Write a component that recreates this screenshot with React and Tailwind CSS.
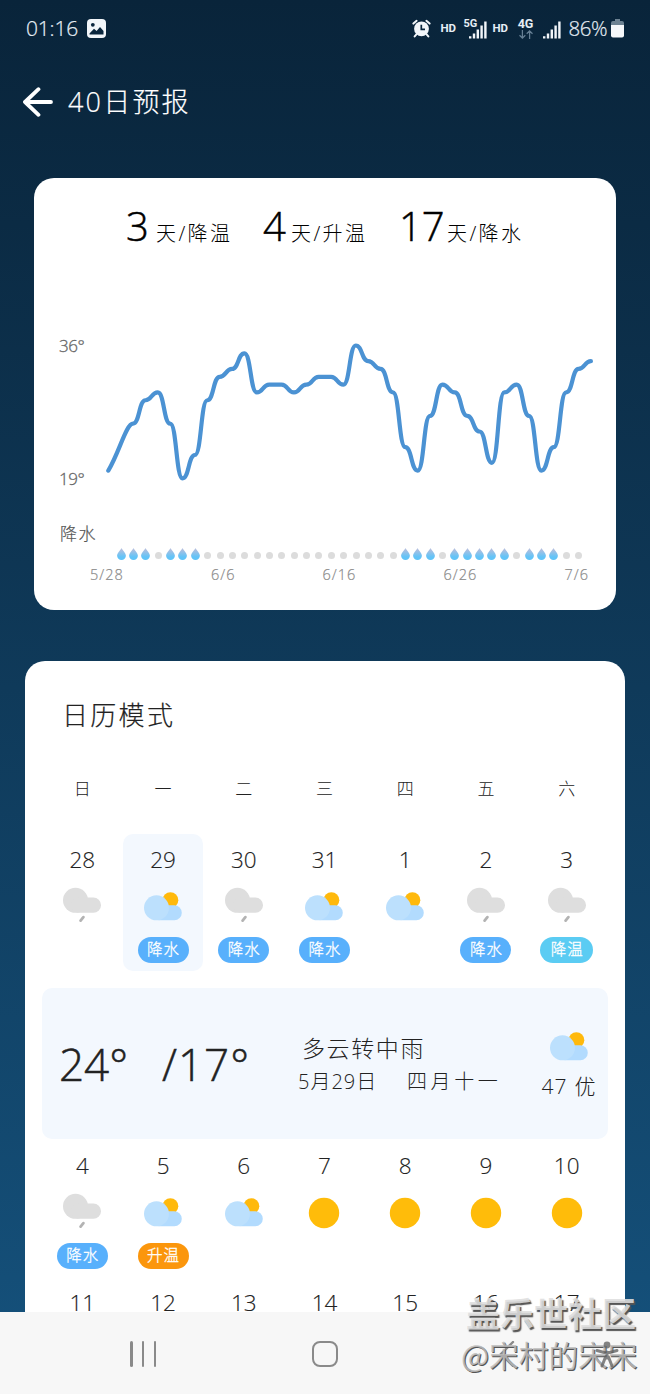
import clsx from 'clsx'

const temps = [
  20, 23, 26, 29, 30, 26, 19, 22, 29, 32, 33, 35, 30, 31, 31, 30, 31, 32, 32, 31,
  36, 34, 33, 30, 23, 20, 27, 31, 30, 27, 25, 21, 30, 31, 27, 20, 23, 30, 33, 34,
]

const rainDays = [0, 1, 2, 4, 5, 6, 23, 24, 25, 27, 28, 29, 30, 31, 33, 34, 35]

const stats = [
  { value: '3', label: '天/降温', box: 'w-[137px]', num: 'w-[30px]' },
  { value: '4', label: '天/升温', box: 'w-[136px]', num: 'w-[28px]' },
  { value: '17', label: '天/降水', box: 'w-[126px]', num: 'w-[48px]' },
]

const weekdays = ['日', '一', '二', '三', '四', '五', '六']

const firstWeek = [
  { day: 28, icon: 'rain' },
  { day: 29, icon: 'cloudy', tag: '降水', selected: true },
  { day: 30, icon: 'rain', tag: '降水' },
  { day: 31, icon: 'cloudy', tag: '降水' },
  { day: 1, icon: 'cloudy' },
  { day: 2, icon: 'rain', tag: '降水' },
  { day: 3, icon: 'rain', tag: '降温' },
]

const secondWeek = [
  { day: 4, icon: 'rain', tag: '降水' },
  { day: 5, icon: 'cloudy', tag: '升温' },
  { day: 6, icon: 'cloudy' },
  { day: 7, icon: 'sun' },
  { day: 8, icon: 'sun' },
  { day: 9, icon: 'sun' },
  { day: 10, icon: 'sun' },
]

const thirdWeek = [11, 12, 13, 14, 15, 16, 17].map((day) => ({ day }))

const tagStyles = {
  降水: 'w-[51px] bg-[#58b0fc]',
  降温: 'w-[53px] bg-[#5bccf3]',
  升温: 'w-[51px] bg-[#fb960c]',
}

function WeatherIcon({ type }) {
  return (
    <svg className="h-9 w-[38px]" viewBox="0 0 38 36">
      {type === 'rain' && (
        <>
          <circle cx="12.5" cy="13.3" r="12.5" fill="#dedede" />
          <rect x="8" y="10.5" width="30" height="15.3" rx="7.6" fill="#dedede" />
          <path d="M20.4 30.2L17.6 33.6" stroke="#b3b3b3" strokeWidth="2.8" strokeLinecap="round" />
        </>
      )}
      {type === 'cloudy' && (
        <>
          <circle cx="26.4" cy="13.2" r="7.9" fill="#ffb90c" />
          <rect x="8" y="18.2" width="29.8" height="15.1" rx="7.5" fill="#b2dbfe" />
          <circle cx="12.5" cy="20.8" r="12.5" fill="#bce0fd" />
        </>
      )}
      {type === 'sun' && <circle cx="19" cy="20" r="15.2" fill="#ffbc0a" />}
    </svg>
  )
}

function StatusBar() {
  return (
    <div className="flex h-[57px] items-center pl-[26px] pr-[26px] text-[#e6eef5]">
      <span className="w-[61px] text-[21px] font-light tracking-[-0.2px] [-webkit-text-stroke:0.2px]">01:16</span>
      <svg className="h-[19px] w-[19px]" viewBox="0 0 19 19">
        <rect width="19" height="19" rx="4" fill="#f2f6fa" />
        <circle cx="5.8" cy="5.8" r="1.9" fill="#0a263d" />
        <path d="M2.5 14.5L7 9.8L9.6 12L13 8L16.5 12V15.5H2.5Z" fill="#0a263d" />
      </svg>
      <svg className="ml-auto h-[19px] w-[19px]" viewBox="0 0 19 19">
        <circle cx="9.5" cy="9.8" r="7.4" fill="#f2f6fa" />
        <path d="M1.4 4.6L4.6 1.8M17.6 4.6L14.4 1.8M4.6 15.2L2.7 17.4M14.4 15.2L16.3 17.4" stroke="#f2f6fa" strokeWidth="2" strokeLinecap="round" />
        <path d="M9.3 5.8V10.4H13" stroke="#0a263d" strokeWidth="1.7" fill="none" />
      </svg>
      <span className="ml-2.5 w-4 font-[Roboto] text-[11.5px] font-bold">HD</span>
      <div className="relative ml-[7px] h-5 w-[25px]">
        <span className="absolute -top-px left-0 font-[Roboto] text-[11px] font-bold leading-none">5G</span>
        <Signal className="absolute right-0.5 top-0.5" />
      </div>
      <span className="ml-1 w-4 font-[Roboto] text-[11.5px] font-bold">HD</span>
      <div className="ml-[9px] flex h-5 w-4 flex-col items-center">
        <span className="font-[Roboto] text-[12.5px] font-bold leading-[9px]">4G</span>
        <svg className="mt-0.5 h-2.5 w-4" viewBox="0 0 16 10" fill="none" stroke="#667f94" strokeWidth="1.4">
          <path d="M4 0V9M0.8 5.8L4 9L7.2 5.8M12 10V1M8.8 4.2L12 1L15.2 4.2" />
        </svg>
      </div>
      <Signal className="ml-[9px] mt-0.5" />
      <span className="ml-2 w-10 whitespace-nowrap text-[20.5px] font-light tracking-[-0.4px] [-webkit-text-stroke:0.2px]">86%</span>
      <svg className="ml-[2.5px] h-[19px] w-[13px]" viewBox="0 0 13 19">
        <path d="M4 0H9V2H11Q13 2 13 4V7H0V4Q0 2 2 2H4Z" fill="#6d8292" />
        <path d="M0 6H13V16.5Q13 18.5 11 18.5H2Q0 18.5 0 16.5Z" fill="#f6f8fa" />
      </svg>
    </div>
  )
}

function Signal({ className }) {
  return (
    <svg className={clsx('h-[18px] w-[18px]', className)} viewBox="0 0 18 18" stroke="#f2f6fa" strokeWidth="2.4">
      <path d="M1.2 17.6V15.2M5 17.6V12.5M8.8 17.6V8.5M12.6 17.6V4.5M16.4 17.6V0.5" />
    </svg>
  )
}

function TemperatureLine() {
  const points = temps.map((t, i) => [6.3 + i * 12.375, 10.5 + (36 - t) * 7.82])
  let d = `M${points[0]} C${points[0][0] + 11},${points[0][1] - 18} ${points[2][0] - 7},${points[2][1]} ${points[2]}`
  for (let i = 3; i < points.length; i++) {
    const [x0, y0] = points[i - 1]
    const [x1, y1] = points[i]
    d += ` C${x0 + 6.5},${y0} ${x1 - 6.5},${y1} ${x1},${y1}`
  }
  return (
    <svg className="h-[155px] w-[500px]" viewBox="0 0 500 155">
      <path d={d} fill="none" stroke="#4b92d3" strokeWidth="4.2" strokeLinecap="round" strokeLinejoin="round" />
    </svg>
  )
}

function RainRow() {
  return (
    <div className="ml-[81px] flex h-4 items-center">
      {Array.from({ length: 38 }, (_, i) => (
        <span key={i} className="flex w-[12.36px] justify-center">
          {rainDays.includes(i) ? (
            <svg className="h-3 w-[9px]" viewBox="0 0 9 12">
              <defs>
                <linearGradient id={`drop-${i}`} x1="0" y1="0" x2="0" y2="1">
                  <stop offset="0.15" stopColor="#b0bfdf" />
                  <stop offset="0.75" stopColor="#62c4f8" />
                </linearGradient>
              </defs>
              <path d="M4.5 0C5.6 2.4 8.9 4.9 8.9 7.7A4.4 4.2 0 0 1 0.1 7.7C0.1 4.9 3.4 2.4 4.5 0Z" fill={`url(#drop-${i})`} />
            </svg>
          ) : (
            <span className="mt-[3px] h-[7px] w-[7px] rounded-full bg-[#dcdcdc]" />
          )}
        </span>
      ))}
    </div>
  )
}

function TrendCard() {
  return (
    <div className="mx-[34px] mt-[31px] h-[432px] rounded-[20px] bg-white">
      <div className="flex h-[157px] pl-[92px] pt-[24px] text-black">
        {stats.map((s) => (
          <div key={s.label} className={clsx('flex h-12 items-baseline whitespace-nowrap', s.box)}>
            <span className={clsx('text-[40px] font-light leading-[48px] [-webkit-text-stroke:0.5px]', s.num)}>{s.value}</span>
            <span className="text-[20px] font-light tracking-[2.4px]">{s.label}</span>
          </div>
        ))}
      </div>
      <div className="flex pl-[25px] text-[17px] font-light text-[#666]">
        <div className="flex w-[43px] flex-col justify-between leading-[22px] tracking-[-0.5px] [-webkit-text-stroke:0.3px]">
          <span>36°</span>
          <span>19°</span>
        </div>
        <TemperatureLine />
      </div>
      <div className="ml-[26px] mt-[31px] h-[25px] text-[17px] font-light leading-[25px] tracking-[1.5px] text-[#555] [-webkit-text-stroke:0.2px]">降水</div>
      <RainRow />
      <div className="ml-14 mt-[5px] flex w-[499px] justify-between text-[14.5px] font-light leading-4 tracking-[1px] text-[#8a8a8a] [-webkit-text-stroke:0.2px]">
        <span>5/28</span>
        <span>6/6</span>
        <span>6/16</span>
        <span>6/26</span>
        <span>7/6</span>
      </div>
    </div>
  )
}

function DayCell({ day, icon, tag, selected }) {
  return (
    <div className={clsx('flex h-[137px] flex-col items-center rounded-[10px]', selected && 'bg-[#f3f8fe]')}>
      <span className="mb-px h-[52px] text-[22.5px] font-light leading-[52px] text-[#222] [-webkit-text-stroke:0.15px]">{day}</span>
      <WeatherIcon type={icon} />
      {tag && (
        <span className={clsx('mt-[14px] flex h-[26px] items-center justify-center rounded-full pl-px text-[15.5px] font-light tracking-[1px] text-white [-webkit-text-stroke:0.3px]', tagStyles[tag])}>
          {tag}
        </span>
      )}
    </div>
  )
}

function Week({ days }) {
  return (
    <div className="mr-px grid grid-cols-7">
      {days.map((d) => (
        <DayCell key={d.day} {...d} />
      ))}
    </div>
  )
}

function CalendarCard() {
  return (
    <div className="mx-[25px] mt-[51px] h-[651px] overflow-hidden rounded-t-[20px] bg-white px-[17px] text-[#222]">
      <h2 className="h-[109px] pl-5 text-[26px] font-light leading-[108px] tracking-[2.3px] [-webkit-text-stroke:0.2px]">日历模式</h2>
      <div className="mr-px grid h-16 grid-cols-7 text-center text-[17px] font-light leading-[37px]">
        {weekdays.map((w) => (
          <span key={w}>{w}</span>
        ))}
      </div>
      <Week days={firstWeek} />
      <div className="mb-px mt-[17px] flex h-[151px] rounded-[10px] bg-[#f3f8fe]">
        <div className="flex h-full w-[256px] items-center pl-[17px] text-[44px] font-light [-webkit-text-stroke:0.5px]">
          <span className="w-[103px]">24°</span>
          <span className="tracking-[1px]">/17°</span>
        </div>
        <div className="w-[238px] pt-[43px] font-light">
          <p className="pl-1 text-[23px] leading-[34px] tracking-[1.6px]">多云转中雨</p>
          <p className="flex pt-0.5 text-[20px] leading-[30px]">
            <span className="w-[109px] tracking-[1px]">5月29日</span>
            <span className="tracking-[3.6px]">四月十一</span>
          </p>
        </div>
        <div className="flex w-[66px] flex-col items-center pt-[39px]">
          <WeatherIcon type="cloudy" />
          <span className="mt-2 whitespace-nowrap text-[21px] font-light leading-[30px] tracking-[1.2px]">47 优</span>
        </div>
      </div>
      <Week days={secondWeek} />
      <Week days={thirdWeek} />
    </div>
  )
}

function NavBar() {
  return (
    <div className="flex h-[82px] items-center justify-between bg-[#f7f7f7] pl-[130px] pr-[130px] pb-px pt-0.5">
      <div className="flex h-[26px] w-[26px] justify-between">
        <span className="w-[2.5px] rounded-full bg-[#8a8a8a]" />
        <span className="w-[2.5px] rounded-full bg-[#8a8a8a]" />
        <span className="w-[2.5px] rounded-full bg-[#8a8a8a]" />
      </div>
      <span className="h-[26px] w-[26px] rounded-lg border-2 border-[#8a8a8a]" />
      <svg className="h-[26px] w-[26px]" viewBox="0 0 26 26" fill="none" stroke="#8a8a8a" strokeWidth="2.4">
        <path d="M19 1L7 13L19 25" strokeLinecap="round" />
      </svg>
    </div>
  )
}

export default function App() {
  return (
    <div className="relative h-[1394px] w-[650px] overflow-hidden bg-linear-to-b from-[#09243a] to-[#15527d] font-['Open_Sans','Noto_Sans_CJK_SC',sans-serif]">
      <StatusBar />
      <header className="flex h-[90px] items-center pl-[23px] text-white">
        <svg className="h-[30px] w-[30px]" viewBox="0 0 30 30" fill="none" stroke="#fff" strokeWidth="3.8" strokeLinecap="round">
          <path d="M28 15H2M15.5 2.2L2 15L15.5 27.8" strokeLinejoin="round" />
        </svg>
        <h1 className="ml-[15px] text-[27px] font-light tracking-[2.2px] [-webkit-text-stroke:0.2px]">40日预报</h1>
      </header>
      <TrendCard />
      <CalendarCard />
      <NavBar />
      <div className="absolute left-[461px] top-[1291px] whitespace-nowrap font-['Noto_Sans_CJK_SC',sans-serif]">
        <p className="pl-[5px] text-[34px] font-bold leading-[43px] text-[#dedede]/90 [text-shadow:1.5px_1.5px_1px_#555]">盖乐世社区</p>
        <p className="text-[29.7px] leading-[42px] text-[#bdbdbd]/85 [text-shadow:1px_1px_0.5px_#555]">@宋村的宋宋</p>
      </div>
      <svg className="absolute left-[594px] top-[1341px] h-[27px] w-[26px] opacity-80" viewBox="0 0 26 27" stroke="#666" strokeLinecap="round">
        <circle cx="13" cy="4" r="3.4" fill="#666" stroke="none" />
        <path d="M3 9.5L10 11.5H16L23 9.5M13 11V17M11.5 16L8 25M14.5 16L18 25" strokeWidth="3" fill="none" />
      </svg>
    </div>
  )
}
